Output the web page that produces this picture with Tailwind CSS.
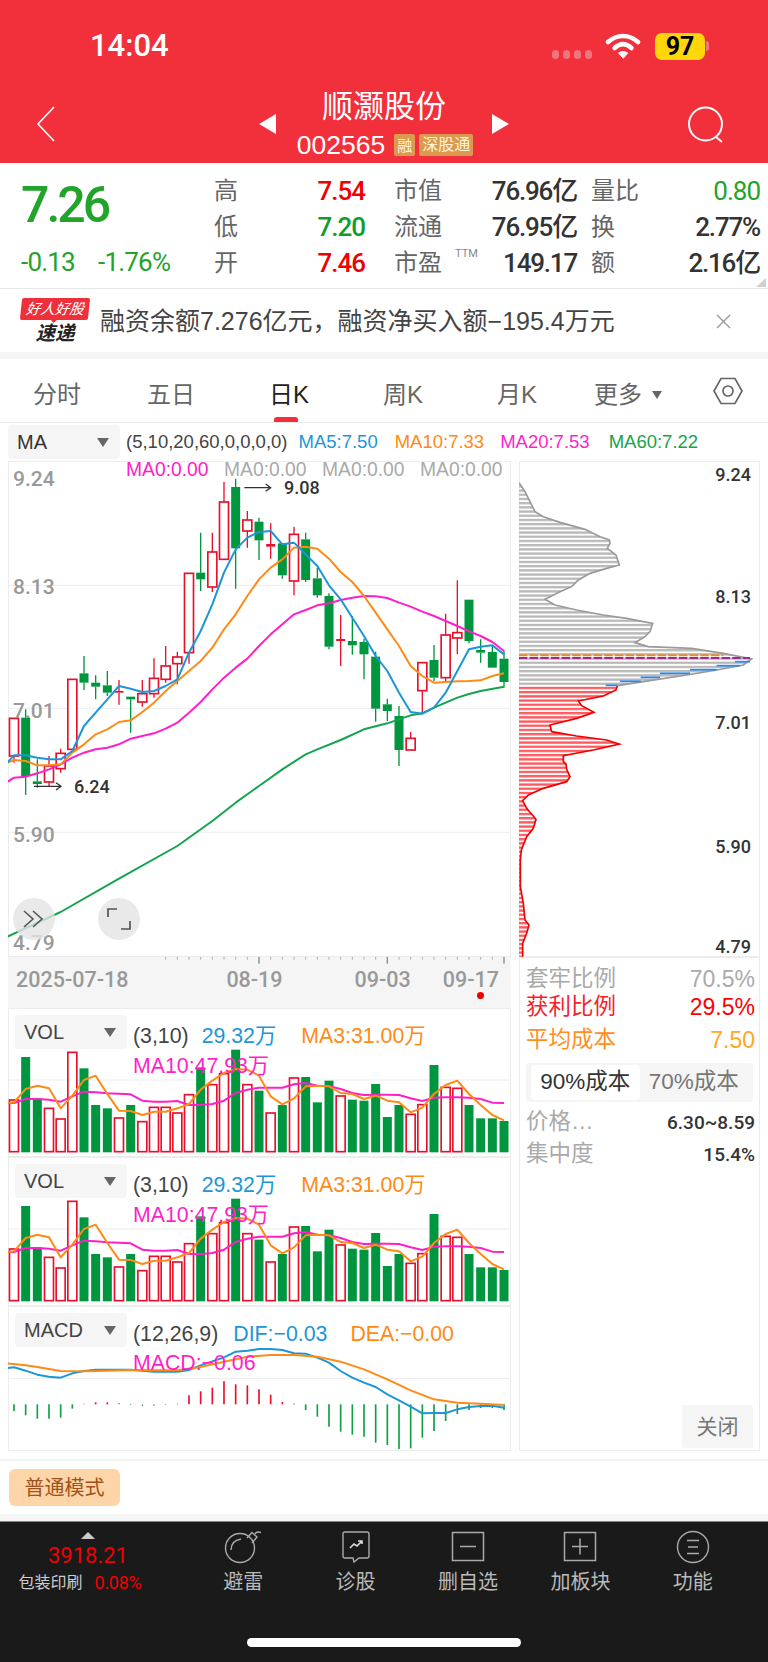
<!DOCTYPE html>
<html lang="zh-CN">
<head>
    <meta charset="UTF-8">
    <meta name="viewport" content="width=device-width, initial-scale=1.0">
    <title>顺灏股份</title>
    <script src="https://cdn.jsdelivr.net/npm/@tailwindcss/browser@4"></script>
</head>
<body class="w-[768px] h-[1662px] overflow-hidden bg-white font-['Liberation_Sans','Noto_Sans_CJK_SC',sans-serif] text-[18.5px] leading-none">

    <!-- header -->
    <header class="relative h-[163px] bg-[#f2303b] text-white">
        <div class="flex items-center h-[92px] pl-[90px] pr-[59px]">
            <span class="text-[31px] font-['Roboto'] font-medium mb-[1px]">14:04</span>
            <div class="ml-auto flex items-center">
                <div class="flex gap-[4px] mt-[16px]">
                    <span class="w-[7px] h-[9px] rounded-full bg-[#f0767d]"></span>
                    <span class="w-[7px] h-[9px] rounded-full bg-[#f0767d]"></span>
                    <span class="w-[7px] h-[9px] rounded-full bg-[#f0767d]"></span>
                    <span class="w-[7px] h-[9px] rounded-full bg-[#f0767d]"></span>
                </div>
                <svg class="ml-[13px]" width="36" height="26" viewBox="0 0 36 26" fill="none" stroke="#fff" stroke-linecap="round">
                    <path d="M3 9 C12 1 24 1 33 9" stroke-width="4.5"/>
                    <path d="M9.5 15 C15 10 21 10 26.5 15" stroke-width="4.5"/>
                    <path d="M18 25 L13.5 20 C16 18 20 18 22.5 20 Z" fill="#fff" stroke-width="1"/>
                </svg>
                <span class="ml-[14px] w-[50px] h-[27px] rounded-[7px] bg-[#ffd60a] text-black text-[25px] font-['Roboto'] font-bold flex items-center justify-center">97</span>
                <span class="ml-[1px] w-[3px] h-[10px] rounded-r-full bg-[#f0767d]"></span>
            </div>
        </div>
        <svg class="absolute left-[36px] top-[106px]" width="20" height="36" viewBox="0 0 20 36" fill="none" stroke="#fff" stroke-width="1.6"><path d="M18 1 L2 18 L18 35"/></svg>
        <svg class="absolute left-[687px] top-[105px]" width="38" height="38" viewBox="0 0 38 38" fill="none" stroke="#fff" stroke-width="2"><circle cx="18.5" cy="19" r="16.5"/><path d="M29 32 L35 37"/></svg>
        <div class="absolute left-0 right-0 top-[91px] flex flex-col items-center">
            <div class="flex items-center h-[31px]">
                <span class="w-0 h-0 border-y-[10px] border-y-transparent border-r-[17px] border-r-white translate-y-[17px]"></span>
                <span class="mx-[45px] text-[31px] w-[126px] text-center whitespace-nowrap">顺灏股份</span>
                <span class="w-0 h-0 border-y-[10px] border-y-transparent border-l-[17px] border-l-white translate-y-[17px]"></span>
            </div>
            <div class="flex items-center mt-[10px] ml-[2px]">
                <span class="text-[26.5px] text-[#fff]">002565</span>
                <span class="ml-[9px] w-[21px] h-[22px] bg-[#dc9a50] text-[#fff3dc] text-[15px] flex items-center justify-center rounded-[2px]">融</span>
                <span class="ml-[4px] w-[54px] h-[22px] bg-[#dc9a50] text-[#fff3dc] text-[16px] flex items-center justify-center rounded-[2px] whitespace-nowrap">深股通</span>
            </div>
        </div>
    </header>

    <!-- quote -->
    <section class="relative flex h-[126px] border-b border-[#e6e6e6] font-['Roboto','Noto_Sans_CJK_SC',sans-serif]">
        <div class="w-[214px] pl-[21px] text-[#22a32a]">
            <div class="text-[50px] font-medium mt-[17px] tracking-[-3px]">7.26</div>
            <div class="flex mt-[19px] text-[26px] tracking-[-0.8px] whitespace-nowrap">
                <span class="w-[77px]">-0.13</span>
                <span>-1.76%</span>
            </div>
        </div>
        <div class="grid grid-cols-[151px_198px_169px] gap-x-[14px] grid-rows-[36px_36px_36px] pt-[10px] text-[24px] text-[#666]">
            <div class="flex items-center justify-between"><span>高</span><span class="text-[26px] tracking-[-1px] text-[#f00000] font-medium">7.54</span></div>
            <div class="flex items-center justify-between ml-[15px]"><span>市值</span><span class="text-[26px] tracking-[-1.2px] text-[#333] font-medium">76.96亿</span></div>
            <div class="flex items-center justify-between"><span>量比</span><span class="text-[26px] tracking-[-1px] text-[#22a32a]">0.80</span></div>
            <div class="flex items-center justify-between"><span>低</span><span class="text-[26px] tracking-[-1px] text-[#0f9d2c] font-medium">7.20</span></div>
            <div class="flex items-center justify-between ml-[15px]"><span>流通</span><span class="text-[26px] tracking-[-1.2px] text-[#333] font-medium">76.95亿</span></div>
            <div class="flex items-center justify-between"><span>换</span><span class="text-[26px] tracking-[-1.2px] text-[#333] font-medium">2.77%</span></div>
            <div class="flex items-center justify-between"><span>开</span><span class="text-[26px] tracking-[-1px] text-[#f00000] font-medium">7.46</span></div>
            <div class="relative flex items-center justify-between ml-[15px]"><span>市盈</span><span class="absolute left-[61px] top-[3px] text-[11px] text-[#888]">TTM</span><span class="text-[26px] tracking-[-1.2px] text-[#333] font-medium">149.17</span></div>
            <div class="flex items-center justify-between"><span>额</span><span class="text-[26px] tracking-[-1.2px] text-[#333] font-medium">2.16亿</span></div>
        </div>
        <span class="absolute right-[2px] bottom-[1px] w-0 h-0 border-b-[9px] border-b-[#d0d0d0] border-l-[10px] border-l-transparent"></span>
    </section>

    <!-- notice -->
    <section class="flex items-center h-[62px] mt-[1px]">
        <div class="w-[70px] ml-[20px] flex flex-col items-center">
            <span class="relative w-[68px] h-[22px] rounded-[2px] bg-[#ef2f3a] text-white text-[14.5px] italic flex items-center justify-center -skew-x-6 whitespace-nowrap">好人好股<span class="absolute left-[30px] top-[21px] w-0 h-0 border-x-[4px] border-x-transparent border-t-[4px] border-t-[#ef2f3a]"></span></span>
            <span class="mt-[4px] text-[19.5px] font-bold italic text-[#222] whitespace-nowrap">速递</span>
        </div>
        <span class="ml-[10px] text-[25px] text-[#444] whitespace-nowrap">融资余额7.276亿元，融资净买入额−195.4万元</span>
        <svg class="ml-auto mr-[37px]" width="15" height="15" viewBox="0 0 15 15" stroke="#999" stroke-width="1.4"><path d="M1 1 L14 14 M14 1 L1 14"/></svg>
    </section>
    <div class="h-[7px] bg-[#f5f5f5]"></div>

    <!-- tabs -->
    <nav class="relative flex items-center h-[64px] border-b border-[#e8e8e8] text-[24px] text-[#666] pt-[8px] whitespace-nowrap">
        <span class="ml-[33px]">分时</span>
        <span class="ml-[66px]">五日</span>
        <span class="ml-[74px] text-[#222]">日K</span>
        <span class="ml-[74px]">周K</span>
        <span class="ml-[74px]">月K</span>
        <span class="ml-[57px]">更多</span>
        <span class="ml-[10px] w-0 h-0 border-x-[5px] border-x-transparent border-t-[8px] border-t-[#666]"></span>
        <svg class="ml-[51px] mb-[7px]" width="30" height="28" viewBox="0 0 30 28" fill="none" stroke="#666" stroke-width="1.7"><path d="M8 1.5 H22 L29 14 L22 26.5 H8 L1 14 Z"/><circle cx="15" cy="14" r="5"/></svg>
        <span class="absolute left-[274px] bottom-[0px] w-[24px] h-[5px] rounded-t-[3px] bg-[#f2303b]"></span>
    </nav>

    <!-- indicator row -->
    <div class="flex items-center h-[38px] whitespace-nowrap">
        <div class="ml-[8px] w-[112px] h-[34px] rounded-[4px] bg-[#f5f5f5] flex items-center pl-[9px] pr-[11px] text-[20px] text-[#333]">
            MA<span class="ml-auto w-0 h-0 border-x-[6px] border-x-transparent border-t-[9px] border-t-[#666]"></span>
        </div>
        <span class="ml-[6px] text-[#444]">(5,10,20,60,0,0,0,0)</span>
        <span class="ml-[11px] text-[#1c96d8]">MA5:7.50</span>
        <span class="ml-[17px] text-[#ff8a15]">MA10:7.33</span>
        <span class="ml-[16px] text-[#ff1fc8]">MA20:7.53</span>
        <span class="ml-[19px] text-[#14a44d]">MA60:7.22</span>
    </div>

    <!-- charts -->
    <main class="flex h-[990px] pl-[8px] whitespace-nowrap">
        <div class="w-[503px] flex flex-col">
            <div class="relative h-[496px] ring-1 ring-inset ring-[#ececec]">
                <svg id="kline" class="absolute inset-0" width="503" height="496" viewBox="24 125 1509 1488"></svg>
                <span class="absolute left-[118px] top-[-1px] text-[19.3px] text-[#ff1fc8]">MA0:0.00</span>
                <span class="absolute left-[216px] top-[-1px] text-[19.3px] text-[#aaa]">MA0:0.00</span>
                <span class="absolute left-[314px] top-[-1px] text-[19.3px] text-[#aaa]">MA0:0.00</span>
                <span class="absolute left-[412px] top-[-1px] text-[19.3px] text-[#aaa]">MA0:0.00</span>
                <span class="absolute left-[5px] top-[8px] text-[21px] text-[#999] font-['Roboto'] font-medium">9.24</span>
                <span class="absolute left-[5px] top-[116px] text-[21px] text-[#999] font-['Roboto'] font-medium">8.13</span>
                <span class="absolute left-[5px] top-[240px] text-[21px] text-[#999] font-['Roboto'] font-medium">7.01</span>
                <span class="absolute left-[5px] top-[364px] text-[21px] text-[#999] font-['Roboto'] font-medium">5.90</span>
                <span class="absolute left-[5px] top-[472px] text-[21px] text-[#999] font-['Roboto'] font-medium">4.79</span>
                <span class="absolute left-[276px] top-[18px] text-[18px] text-[#333] font-['Roboto'] font-medium">9.08</span>
                <span class="absolute left-[66px] top-[317px] text-[18px] text-[#333] font-['Roboto'] font-medium">6.24</span>
                <div class="absolute left-[5px] top-[437px] w-[42px] h-[42px] rounded-full bg-[#e4e4e4]/80 flex items-center justify-center">
                    <svg width="24" height="18" viewBox="0 0 24 18" fill="none" stroke="#555" stroke-width="1.6"><path d="M2 1 L11 9 L2 17 M11 1 L20 9 L11 17"/></svg>
                </div>
                <div class="absolute left-[90px] top-[437px] w-[42px] h-[42px] rounded-full bg-[#e4e4e4]/80 flex items-center justify-center">
                    <svg width="24" height="22" viewBox="0 0 24 22" fill="none" stroke="#555" stroke-width="1.7"><path d="M1 9 V1 H10 M23 13 V21 H14"/></svg>
                </div>
            </div>
            <div class="relative flex h-[52px] bg-[#f5f5f5] pl-[8px] pt-[12px] text-[21.5px] text-[#999] font-['Roboto'] font-medium">
                <svg id="ticks" class="absolute left-0 top-0" width="503" height="8" viewBox="24 0 1509 24"></svg>
                <span>2025-07-18</span>
                <span class="ml-[98px]">08-19</span>
                <span class="ml-[72px]">09-03</span>
                <span class="ml-[32px]">09-17</span>
                <span class="absolute left-[469px] top-[35px] w-[7px] h-[7px] rounded-full bg-[#f00000]"></span>
            </div>
            <div class="relative h-[149px] ring-1 ring-inset ring-[#ececec]">
                <svg class="vol absolute inset-0" width="503" height="148" viewBox="24 27 1509 444"></svg>
                <div class="absolute left-[7px] top-[7px] w-[112px] h-[34px] rounded-[4px] bg-[#f5f5f5] flex items-center pl-[9px] pr-[11px] text-[20px] text-[#444]">
                    VOL<span class="ml-auto w-0 h-0 border-x-[6px] border-x-transparent border-t-[9px] border-t-[#666]"></span>
                </div>
                <div class="absolute left-[125px] top-[18px] flex text-[21.3px] text-[#444]">(3,10)<span class="ml-[13px] text-[#1c96d8]">29.32万</span><span class="ml-[25px] text-[#ff8a15]">MA3:31.00万</span></div>
                <span class="absolute left-[125px] top-[48px] text-[21.3px] text-[#ff1fc8]">MA10:47.93万</span>
            </div>
            <div class="relative h-[149px] ring-1 ring-inset ring-[#ececec]">
                <svg class="vol absolute inset-0" width="503" height="148" viewBox="24 27 1509 444"></svg>
                <div class="absolute left-[7px] top-[7px] w-[112px] h-[34px] rounded-[4px] bg-[#f5f5f5] flex items-center pl-[9px] pr-[11px] text-[20px] text-[#444]">
                    VOL<span class="ml-auto w-0 h-0 border-x-[6px] border-x-transparent border-t-[9px] border-t-[#666]"></span>
                </div>
                <div class="absolute left-[125px] top-[18px] flex text-[21.3px] text-[#444]">(3,10)<span class="ml-[13px] text-[#1c96d8]">29.32万</span><span class="ml-[25px] text-[#ff8a15]">MA3:31.00万</span></div>
                <span class="absolute left-[125px] top-[48px] text-[21.3px] text-[#ff1fc8]">MA10:47.93万</span>
            </div>
            <div class="relative h-[145px] ring-1 ring-inset ring-[#ececec]">
                <svg id="macd" class="absolute inset-0" width="503" height="145" viewBox="24 20 1509 435"></svg>
                <div class="absolute left-[7px] top-[7px] w-[112px] h-[34px] rounded-[4px] bg-[#f5f5f5] flex items-center pl-[9px] pr-[11px] text-[20px] text-[#444]">
                    MACD<span class="ml-auto w-0 h-0 border-x-[6px] border-x-transparent border-t-[9px] border-t-[#666]"></span>
                </div>
                <div class="absolute left-[125px] top-[18px] flex text-[21.3px] text-[#444]">(12,26,9)<span class="ml-[15px] text-[#1c96d8]">DIF:−0.03</span><span class="ml-[23px] text-[#ff8a15]">DEA:−0.00</span></div>
                <span class="absolute left-[125px] top-[47px] text-[21.3px] text-[#ff1fc8]">MACD:−0.06</span>
            </div>
        </div>

        <div class="ml-[8px] w-[241px] flex flex-col">
            <div class="relative h-[496px] ring-1 ring-inset ring-[#ececec]">
                <svg id="profile" class="absolute inset-0" width="241" height="496" viewBox="27 3 723 1488"></svg>
                <span class="absolute right-[9px] top-[5px] text-[18px] text-[#333] font-['Roboto'] font-medium">9.24</span>
                <span class="absolute right-[9px] top-[127px] text-[18px] text-[#333] font-['Roboto'] font-medium">8.13</span>
                <span class="absolute right-[9px] top-[253px] text-[18px] text-[#333] font-['Roboto'] font-medium">7.01</span>
                <span class="absolute right-[9px] top-[377px] text-[18px] text-[#333] font-['Roboto'] font-medium">5.90</span>
                <span class="absolute right-[9px] top-[477px] text-[18px] text-[#333] font-['Roboto'] font-medium">4.79</span>
            </div>
            <div class="relative h-[494px] ring-1 ring-inset ring-[#ececec] pl-[7px] pr-[5px] pt-[11px]">
                <div class="flex items-center justify-between h-[22px] text-[22.5px] text-[#aaa]"><span>套牢比例</span><span class="text-[23px]">70.5%</span></div>
                <div class="flex items-center justify-between h-[22px] mt-[6px] text-[22.5px] text-[#f5222d]"><span>获利比例</span><span class="text-[23px] text-[#ff0000]">29.5%</span></div>
                <div class="flex items-center justify-between h-[22px] mt-[11px] text-[22.5px] text-[#ff8f1f]"><span>平均成本</span><span class="text-[23px] text-[#ffa726]">7.50</span></div>
                <div class="flex items-center h-[39px] mt-[12px] mr-[2px] rounded-[4px] bg-[#f5f5f5] px-[5px] text-[22.5px] text-[#777]">
                    <span class="w-[109px] h-[35px] rounded-[4px] bg-white text-[#333] flex items-center justify-center">90%成本</span>
                    <span class="w-[109px] flex items-center justify-center">70%成本</span>
                </div>
                <div class="flex items-center justify-between h-[22px] mt-[9px] text-[22.5px] text-[#aaa]"><span>价格…</span><span class="text-[19px] text-[#333] font-['Roboto'] font-medium">6.30~8.59</span></div>
                <div class="flex items-center justify-between h-[22px] mt-[10px] text-[22.5px] text-[#aaa]"><span>集中度</span><span class="text-[19px] text-[#333] font-['Roboto'] font-medium">15.4%</span></div>
                <div class="absolute right-[7px] bottom-[3px] w-[71px] h-[43px] rounded-[3px] bg-[#f5f5f5] text-[21px] text-[#777] flex items-center justify-center">关闭</div>
            </div>
        </div>
    </main>

    <div class="h-[2px] mt-[8px] bg-[#f4f4f4]"></div>
    <div class="h-[53px] pl-[9px] pt-[8px]">
        <span class="flex items-center justify-center w-[111px] h-[37px] rounded-[6px] bg-[#fdd5a8] text-[20px] text-[#a0521a]">普通模式</span>
    </div>
    <div class="h-[7px] bg-[#f5f5f5]"></div>

    <!-- bottom bar -->
    <footer class="relative flex h-[141px] bg-[#1a1a1a] text-[#bbb] border-t border-[#888]">
        <div class="w-[187px] flex flex-col items-center pr-[11px] whitespace-nowrap">
            <span class="mt-[10px] w-0 h-0 border-x-[7px] border-x-transparent border-b-[7px] border-b-[#ccc]"></span>
            <span class="mt-[6px] text-[22px] text-[#f00000] font-['Roboto']">3918.21</span>
            <div class="flex items-center mt-[7px] mr-[16px]">
                <span class="text-[16px] text-[#ccc]">包装印刷</span>
                <span class="ml-[12px] text-[18px] text-[#f00000] font-['Roboto'] tracking-[-0.3px]">0.08%</span>
            </div>
        </div>
        <div class="grid grid-cols-5 w-[562px] pt-[8px] text-[20px]">
            <div class="flex flex-col items-center">
                <svg width="38" height="34" viewBox="0 0 38 34" fill="none" stroke="#aaa" stroke-width="1.4"><circle cx="16" cy="18" r="14.5"/><path d="M7 20 C7 14 11 10 17 9"/><path d="M23 8 L28 2.5 L33 7 L28 13"/><path d="M31 4 C32 2 34 1.5 37 2.5"/></svg>
                <span class="mt-[8px]">避雷</span>
            </div>
            <div class="flex flex-col items-center">
                <svg width="30" height="34" viewBox="0 0 30 34" fill="none" stroke="#aaa" stroke-width="1.4"><path d="M4 2 H26 Q28 2 28 4 V26 Q28 28 26 28 H18 L13 32 L12 28 H4 Q2 28 2 26 V4 Q2 2 4 2 Z"/><path d="M9 18 L13 14 L16 16 L21 11 M17 11 H21 V14" stroke="#ddd" stroke-width="1.6"/></svg>
                <span class="mt-[8px]">诊股</span>
            </div>
            <div class="flex flex-col items-center">
                <svg width="34" height="34" viewBox="0 0 34 34" fill="none" stroke="#aaa" stroke-width="1.5"><rect x="1.5" y="2.5" width="31" height="28"/><path d="M9 16.5 H25"/></svg>
                <span class="mt-[8px]">删自选</span>
            </div>
            <div class="flex flex-col items-center">
                <svg width="34" height="34" viewBox="0 0 34 34" fill="none" stroke="#aaa" stroke-width="1.5"><rect x="1.5" y="2.5" width="31" height="28"/><path d="M9 16.5 H25 M17 8.5 V24.5"/></svg>
                <span class="mt-[8px]">加板块</span>
            </div>
            <div class="flex flex-col items-center">
                <svg width="34" height="34" viewBox="0 0 34 34" fill="none" stroke="#aaa" stroke-width="1.4"><circle cx="17" cy="17" r="15.5"/><path d="M11 10.5 H23 M12 17 H22 M11 23.5 H23" stroke-width="1.6"/></svg>
                <span class="mt-[8px]">功能</span>
            </div>
        </div>
        <span class="absolute left-[247px] top-[116px] w-[274px] h-[9px] rounded-full bg-white"></span>
    </footer>

    <script>
        // all chart numbers are in the 3x pixel grid the chart was measured on
        var RED = '#e8112d', GREEN = '#009640';
        var BLUE = '#1c96d8', ORANGE = '#ff8a15', PINK = '#ff1fc8', LINE_GREEN = '#14a44d';
        function xAt(i) { return 42 + i * 35; }
        function poly(pts, color, w) {
            return '<polyline fill="none" stroke="' + color + '" stroke-width="' + (w || 6) + '" stroke-linejoin="round" points="' + pts.join(' ') + '"/>';
        }
        function series(ys, start) {
            return ys.map(function (y, i) { return xAt(i + (start || 0)) + ',' + y; });
        }
        function rect(x, y, w, h, attrs) {
            return '<rect x="' + x + '" y="' + y + '" width="' + w + '" height="' + h + '" ' + attrs + '/>';
        }
        function vline(x, y1, y2, color, w) {
            return '<line x1="' + x + '" x2="' + x + '" y1="' + y1 + '" y2="' + y2 + '" stroke="' + color + '" stroke-width="' + w + '"/>';
        }

        // color, high, body top, body bottom, low
        var candles = [
            ['r',897,897,1010,1030],['g',870,895,1070,1127],['g',1020,1086,1094,1105],['r',1010,1040,1088,1100],['r',988,1002,1048,1060],
            ['r',780,780,990,990],['g',710,762,790,812],['g',768,790,802,840],['g',755,798,820,830],['d',782,815,820,856],
            ['g',832,832,840,940],['r',782,823,848,862],['r',717,777,823,835],['r',680,740,780,790],['r',697,713,733,795],
            ['r',462,462,700,733],['g',340,460,480,515],['r',340,398,503,518],['r',188,248,420,420],['g',178,203,387,508],
            ['r',275,302,335,385],['g',295,307,363,422],['d',312,374,382,418],['g',372,372,468,478],['r',322,345,485,528],
            ['g',340,360,482,488],['g',445,477,528,535],['g',522,530,682,690],['d',587,659,665,740],['g',590,665,678,706],
            ['g',658,668,705,780],['g',697,712,868,907],['g',838,855,875,905],['g',860,890,992,1040],['r',938,957,992,992],
            ['r',730,730,814,882],['g',677,722,775,785],['r',583,647,775,785],['r',483,640,656,705],['g',541,541,665,672],
            ['g',660,692,700,730],['g',678,698,745,745],['g',695,718,788,805]
        ];
        var ma5 = [1008,1008,1015,1020,1020,995,920,880,840,800,808,818,815,800,780,700,635,555,460,390,355,338,335,375,370,405,440,498,540,595,650,710,755,820,878,883,865,820,755,690,682,678,705];
        var ma10 = [1022,1025,1038,1038,1035,1000,975,945,930,908,903,878,850,815,785,755,725,685,630,585,530,480,445,420,385,382,388,418,458,488,530,580,630,680,740,770,790,788,786,785,783,770,762];
        var ma20 = [1075,1072,1062,1050,1035,1015,1000,990,985,975,958,950,942,928,910,880,848,810,775,745,718,680,645,615,585,572,558,552,542,535,530,531,536,550,562,577,590,605,620,636,650,668,695];
        var ma60 = ['22,1552','182,1478','357,1378','532,1280','637,1205','707,1150','777,1100','847,1050','917,1005','952,990','1022,962','1092,930','1162,912','1232,888','1267,882','1302,865','1372,835','1407,824','1442,815','1512,802'];

        var k = '';
        [586, 709, 833].forEach(function (y) {
            var gy = (y - 420) * 3;
            k += '<line x1="24" x2="1533" y1="' + gy + '" y2="' + gy + '" stroke="#ececec" stroke-width="3"/>';
        });
        candles.forEach(function (c, i) {
            var x = xAt(i), color = c[0] === 'g' ? GREEN : RED;
            k += vline(x, c[1], c[2], color, 4) + vline(x, c[3], c[4], color, 4);
            if (c[0] === 'r') k += rect(x - 13.5, c[2], 27, c[3] - c[2], 'fill="#fff" stroke="' + color + '" stroke-width="5"');
            else k += rect(x - 13.5, c[2], 27, c[3] - c[2], 'fill="' + color + '"');
        });
        k += poly(['22,1088'].concat(series(ma20)), PINK);
        k += poly(ma60, LINE_GREEN);
        k += poly(['22,1030'].concat(series(ma10)), ORANGE);
        k += poly(['22,1030'].concat(series(ma5)), BLUE);
        // arrows to the high and low
        k += '<path d="M733 205 H812 M797 194 L812 205 L797 216" fill="none" stroke="#333" stroke-width="4"/>';
        k += '<path d="M102 1101 H183 M168 1090 L183 1101 L168 1112" fill="none" stroke="#333" stroke-width="4"/>';
        document.getElementById('kline').innerHTML = k;

        var t = '';
        for (var i = 13; i < 43; i++) {
            var major = i === 21 || i === 32 || i === 42;
            t += vline(xAt(i), 0, major ? 20 : 8, major ? '#888' : '#aaa', major ? 4 : 3);
        }
        document.getElementById('ticks').innerHTML = t;

        // volume panels
        var vols = [['r',303],['g',174],['g',298],['r',328],['r',360],['r',160],['g',208],['g',318],['g',328],['r',357],['g',318],['r',368],['r',325],['r',325],['r',342],['r',287],['g',205],['r',257],['r',224],['g',152],['r',257],['g',275],['r',342],['g',318],['r',237],['g',234],['g',310],['g',245],['r',291],['g',302],['g',305],['g',255],['g',354],['g',318],['r',346],['r',317],['g',198],['r',265],['r',268],['g',318],['g',358],['g',358],['g',366]];
        var volOrange = [310,270,260,268,328,290,243,230,285,335,336,348,338,338,328,315,272,245,222,210,212,230,292,316,298,262,260,262,282,285,300,290,305,310,340,326,285,258,245,285,318,348,364];
        var volPink = [312,300,300,302,308,292,278,280,283,284,286,305,308,308,306,318,318,315,305,282,272,266,266,266,256,252,260,262,270,282,288,287,287,288,298,306,296,295,295,296,300,311,312];
        var v = '<line x1="24" x2="1533" y1="243" y2="243" stroke="#ececec" stroke-width="3"/>';
        vols.forEach(function (b, i) {
            var x = xAt(i);
            if (b[0] === 'r') v += rect(x - 13.5, b[1], 27, 458 - b[1], 'fill="#fff" stroke="' + RED + '" stroke-width="5"');
            else v += rect(x - 13.5, b[1], 27, 458 - b[1] + 2, 'fill="' + GREEN + '"');
        });
        v += poly(['22,312'].concat(series(volPink)), PINK);
        v += poly(['22,312'].concat(series(volOrange)), ORANGE);
        document.querySelectorAll('.vol').forEach(function (s) { s.innerHTML = v; });

        // macd panel, zero line at 315
        var hist = [335,348,358,358,355,328,313,309,309,311,317,320,320,317,313,288,276,265,246,255,258,270,286,308,312,332,352,382,397,406,412,430,437,449,447,415,395,365,344,332,326,326,332];
        var dif = [204,214,226,232,235,222,215,211,211,211,211,214,217,217,217,212,198,186,174,157,154,149,149,152,162,163,175,190,215,235,250,263,285,303,322,342,341,341,330,323,320,319,325];
        var dea = ['22,192','77,198','112,203','147,209','182,215','252,216','322,214','392,212','462,213','532,213','602,203','672,187','742,172','812,167','882,167','952,172','1022,187','1092,210','1162,240','1232,273','1302,300','1372,310','1442,313','1512,317'];
        var m = '<line x1="24" x2="1533" y1="237" y2="237" stroke="#ececec" stroke-width="3"/>';
        hist.forEach(function (y, i) {
            m += vline(xAt(i), 315, y, y < 315 ? RED : '#0fa044', Math.abs(y - 315) < 6 ? 3 : 5);
        });
        m += poly(['22,206'].concat(series(dif)), BLUE);
        m += poly(dea, ORANGE);
        document.getElementById('macd').innerHTML = m;

        // chip distribution
        var grayEdge = '27,68 45,95 75,155 100,170 150,187 225,208 270,230 298,240 300,250 292,265 318,285 328,315 290,325 240,340 205,360 185,380 150,395 105,418 135,435 200,450 280,465 350,475 428,490 420,515 405,530 375,548 415,560 545,565 640,580 725,597 700,615 620,630 530,645 400,665 322,677';
        var redEdge = '322,677 318,690 280,708 205,723 215,737 252,757 200,775 120,795 125,815 200,828 290,840 328,852 250,870 160,887 160,905 168,912 170,928 180,950 170,965 100,985 55,1005 38,1022 50,1045 78,1078 70,1105 50,1130 34,1170 31,1200 31,1280 40,1330 45,1380 57,1395 50,1420 38,1450 38,1490';
        var p = '<defs>' +
            '<pattern id="gs" patternUnits="userSpaceOnUse" width="20" height="12.6"><rect width="20" height="7" fill="#b9b9b9"/></pattern>' +
            '<pattern id="rs" patternUnits="userSpaceOnUse" width="20" height="12.6"><rect width="20" height="7" fill="#ff5a5f"/></pattern>' +
            '</defs>';
        p += '<polygon points="' + grayEdge + ' 27,677" fill="url(#gs)"/>';
        p += '<polygon points="' + redEdge + ' 27,1490 27,677" fill="url(#rs)"/>';
        p += '<polyline points="' + grayEdge + '" fill="none" stroke="#9a9a9a" stroke-width="5"/>';
        p += '<polyline points="' + redEdge + '" fill="none" stroke="#f00000" stroke-width="5"/>';
        [[675,720,605],[620,690,617],[540,620,629],[450,540,640],[392,450,652],[330,392,664],[287,322,676]].forEach(function (d) {
            p += '<line x1="' + d[0] + '" x2="' + d[1] + '" y1="' + d[2] + '" y2="' + d[2] + '" stroke="#1a8cff" stroke-width="5"/>';
        });
        p += '<line x1="27" x2="640" y1="586" y2="586" stroke="#f08a24" stroke-width="6" stroke-dasharray="25 7"/>';
        p += '<line x1="27" x2="720" y1="594" y2="594" stroke="#9b2a9b" stroke-width="6" stroke-dasharray="25 7"/>';
        document.getElementById('profile').innerHTML = p;
    </script>
</body>
</html>
